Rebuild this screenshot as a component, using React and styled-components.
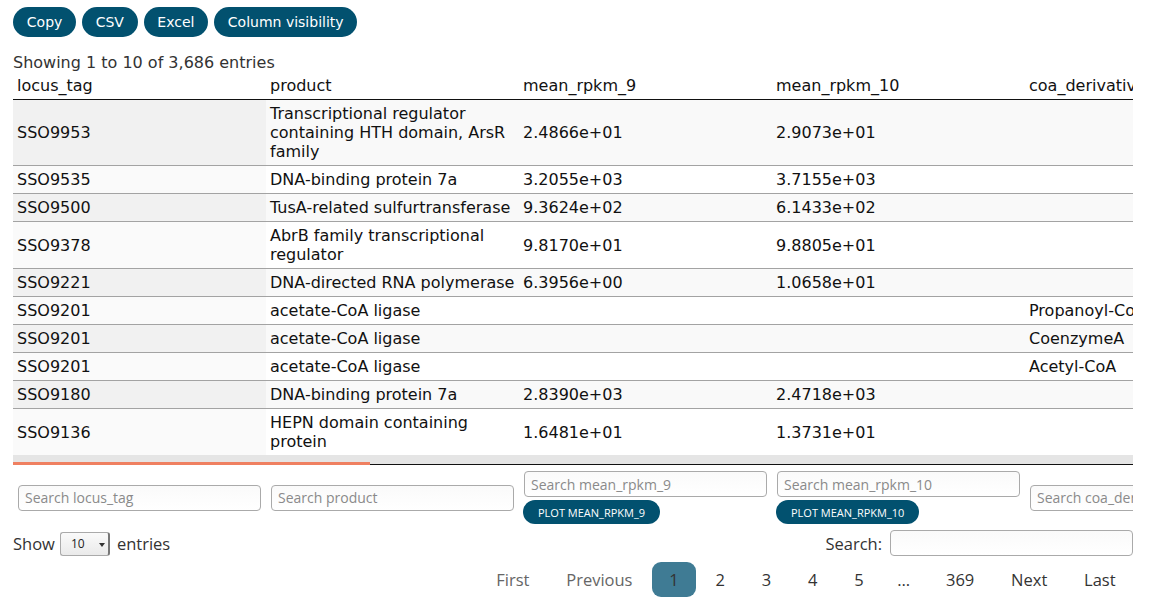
import React from "react";
import styled, { createGlobalStyle } from "styled-components";

const GlobalStyle = createGlobalStyle`
  html, body { margin: 0; padding: 0; background: #fff; }
  body { font-family: "DejaVu Sans", Verdana, sans-serif; color: #111; }
  * { box-sizing: border-box; }
`;

const Page = styled.div`
  width: 1120px;
  margin-left: 13px;
  padding-top: 7px;
`;

const ButtonBar = styled.div`
  display: flex;
  gap: 5.8px;
`;

const PillButton = styled.button`
  height: 30px;
  padding: 0 13.8px;
  border: none;
  border-radius: 15px;
  background: #02516f;
  color: #fff;
  font-family: "DejaVu Sans", sans-serif;
  font-size: 14px;
  line-height: 16px;
  cursor: pointer;
`;

const Info = styled.div`
  margin-top: 16px;
  font-size: 16px;
  line-height: 19px;
  color: #333;
`;

const ScrollArea = styled.div`
  width: 1120px;
  overflow: hidden;
`;

const Table = styled.table`
  width: ${(p) => p.$cols * 253}px;
  table-layout: fixed;
  border-collapse: separate;
  border-spacing: 0;
  font-size: 16px;
  line-height: 19px;
  color: #111;
`;

const HeadCell = styled.th`
  width: 253px;
  padding: 4px;
  text-align: left;
  font-weight: normal;
  white-space: nowrap;
  overflow: hidden;
  border-bottom: 1px solid #111;
`;

const Row = styled.tr`
  background: ${(p) => (p.$odd ? "#f9f9f9" : "#ffffff")};
`;

const Cell = styled.td`
  padding: 4px;
  vertical-align: middle;
  border-top: ${(p) => (p.$first ? "none" : "1px solid #a3a3a3")};
  background: ${(p) => (p.$sorted ? (p.$odd ? "#f1f1f1" : "#fafafa") : "transparent")};
  white-space: ${(p) => (p.$nowrap ? "nowrap" : "normal")};
  overflow: hidden;
`;

const Track = styled.div`
  height: 7px;
  background: #e5e5e5;
`;

const TrackBottom = styled.div`
  display: flex;
  height: 3px;
`;

const Thumb = styled.div`
  width: 357px;
  background: #ef8061;
`;

const TrackRest = styled.div`
  flex: 1;
  background: #e5e5e5;
  border-bottom: 1px solid #111;
`;

const FootCell = styled.th`
  width: 253px;
  padding: 6px 5px;
  vertical-align: middle;
  text-align: left;
  font-weight: normal;
`;

const FilterStack = styled.div`
  display: flex;
  flex-direction: column;
  align-items: flex-start;
  gap: 3px;
`;

const TextInput = styled.input`
  width: ${(p) => p.$w || 243}px;
  height: 26px;
  padding: 0 6px;
  border: 1px solid #aaa;
  border-radius: 4px;
  background: linear-gradient(#fafafa, #ffffff);
  font-family: "Open Sans", sans-serif;
  font-size: 14px;
  color: #333;
  outline: none;
  &::placeholder { color: #8a8a8a; }
`;

const PlotButton = styled.button`
  height: 24px;
  margin-left: -1px;
  padding: 0 15px;
  border: none;
  border-radius: 12px;
  background: #02516f;
  color: #fff;
  font-family: "Open Sans", sans-serif;
  font-size: 11px;
`;

const ControlRow = styled.div`
  display: flex;
  justify-content: space-between;
  align-items: center;
  height: 26px;
  font-family: "Open Sans", sans-serif;
  font-size: 16.5px;
  color: #333;
`;

const LengthGroup = styled.label`
  display: flex;
  align-items: center;
`;

const FakeSelect = styled.span`
  position: relative;
  display: inline-flex;
  align-items: center;
  width: 50px;
  height: 24px;
  margin: 1px 7px 0 5px;
  padding-left: 10px;
  border: 1px solid #aaa;
  border-right: 2px solid #777;
  border-radius: 3px;
  background: linear-gradient(#fafafa, #eaeaea);
  font-size: 12px;
  color: #222;
`;

const SelectArrow = styled.span`
  position: absolute;
  right: 3px;
  top: 10px;
  width: 0;
  height: 0;
  border-left: 3px solid transparent;
  border-right: 3px solid transparent;
  border-top: 4px solid #333;
`;

const SearchGroup = styled.label`
  display: flex;
  align-items: center;
  gap: 8px;
`;

const Pager = styled.div`
  display: flex;
  justify-content: flex-end;
  align-items: center;
  margin-top: 6px;
  font-family: "Open Sans", sans-serif;
  font-size: 16.5px;
`;

const PageButton = styled.span`
  display: inline-block;
  min-width: 26px;
  margin-left: 2px;
  padding: 8px 16.4px;
  border: 1px solid transparent;
  border-radius: 9px;
  line-height: 17px;
  text-align: center;
  color: ${(p) => (p.$disabled ? "#666" : "#333")};
  background: ${(p) => (p.$current ? "#3f7b94" : "transparent")};
`;

const Ellipsis = styled.span`
  padding: 0 16.4px;
  color: #333;
`;

const columns = ["locus_tag", "product", "mean_rpkm_9", "mean_rpkm_10", "coa_derivative"];

const rows = [
  ["SSO9953", "Transcriptional regulator containing HTH domain, ArsR family", "2.4866e+01", "2.9073e+01", ""],
  ["SSO9535", "DNA-binding protein 7a", "3.2055e+03", "3.7155e+03", ""],
  ["SSO9500", "TusA-related sulfurtransferase", "9.3624e+02", "6.1433e+02", ""],
  ["SSO9378", "AbrB family transcriptional regulator", "9.8170e+01", "9.8805e+01", ""],
  ["SSO9221", "DNA-directed RNA polymerase", "6.3956e+00", "1.0658e+01", ""],
  ["SSO9201", "acetate-CoA ligase", "", "", "Propanoyl-CoA"],
  ["SSO9201", "acetate-CoA ligase", "", "", "CoenzymeA"],
  ["SSO9201", "acetate-CoA ligase", "", "", "Acetyl-CoA"],
  ["SSO9180", "DNA-binding protein 7a", "2.8390e+03", "2.4718e+03", ""],
  ["SSO9136", "HEPN domain containing protein", "1.6481e+01", "1.3731e+01", ""],
];

const plotCols = ["mean_rpkm_9", "mean_rpkm_10"];

export default function App() {
  return (
    <>
      <GlobalStyle />
      <Page>
        <ButtonBar>
          <PillButton>Copy</PillButton>
          <PillButton>CSV</PillButton>
          <PillButton>Excel</PillButton>
          <PillButton>Column visibility</PillButton>
        </ButtonBar>
        <Info>Showing 1 to 10 of 3,686 entries</Info>
        <ScrollArea>
          <Table $cols={columns.length}>
            <thead>
              <tr>
                {columns.map((c) => (
                  <HeadCell key={c}>{c}</HeadCell>
                ))}
              </tr>
            </thead>
            <tbody>
              {rows.map((r, i) => {
                const odd = i % 2 === 0;
                return (
                  <Row key={i} $odd={odd}>
                    {r.map((v, j) => (
                      <Cell key={j} $first={i === 0} $odd={odd} $sorted={j === 0} $nowrap={j === 4}>
                        {v}
                      </Cell>
                    ))}
                  </Row>
                );
              })}
            </tbody>
          </Table>
          <Track />
          <TrackBottom>
            <Thumb />
            <TrackRest />
          </TrackBottom>
          <Table $cols={columns.length}>
            <tfoot>
              <tr>
                {columns.map((c) => (
                  <FootCell key={c}>
                    {plotCols.includes(c) ? (
                      <FilterStack>
                        <TextInput placeholder={`Search ${c}`} />
                        <PlotButton>{`PLOT ${c.toUpperCase()}`}</PlotButton>
                      </FilterStack>
                    ) : (
                      <TextInput placeholder={`Search ${c}`} />
                    )}
                  </FootCell>
                ))}
              </tr>
            </tfoot>
          </Table>
        </ScrollArea>
        <ControlRow>
          <LengthGroup>
            Show
            <FakeSelect>
              10
              <SelectArrow />
            </FakeSelect>
            entries
          </LengthGroup>
          <SearchGroup>
            Search:
            <TextInput />
          </SearchGroup>
        </ControlRow>
        <Pager>
          <PageButton $disabled>First</PageButton>
          <PageButton $disabled>Previous</PageButton>
          <PageButton $current>1</PageButton>
          <PageButton>2</PageButton>
          <PageButton>3</PageButton>
          <PageButton>4</PageButton>
          <PageButton>5</PageButton>
          <Ellipsis>…</Ellipsis>
          <PageButton>369</PageButton>
          <PageButton>Next</PageButton>
          <PageButton>Last</PageButton>
        </Pager>
      </Page>
    </>
  );
}
